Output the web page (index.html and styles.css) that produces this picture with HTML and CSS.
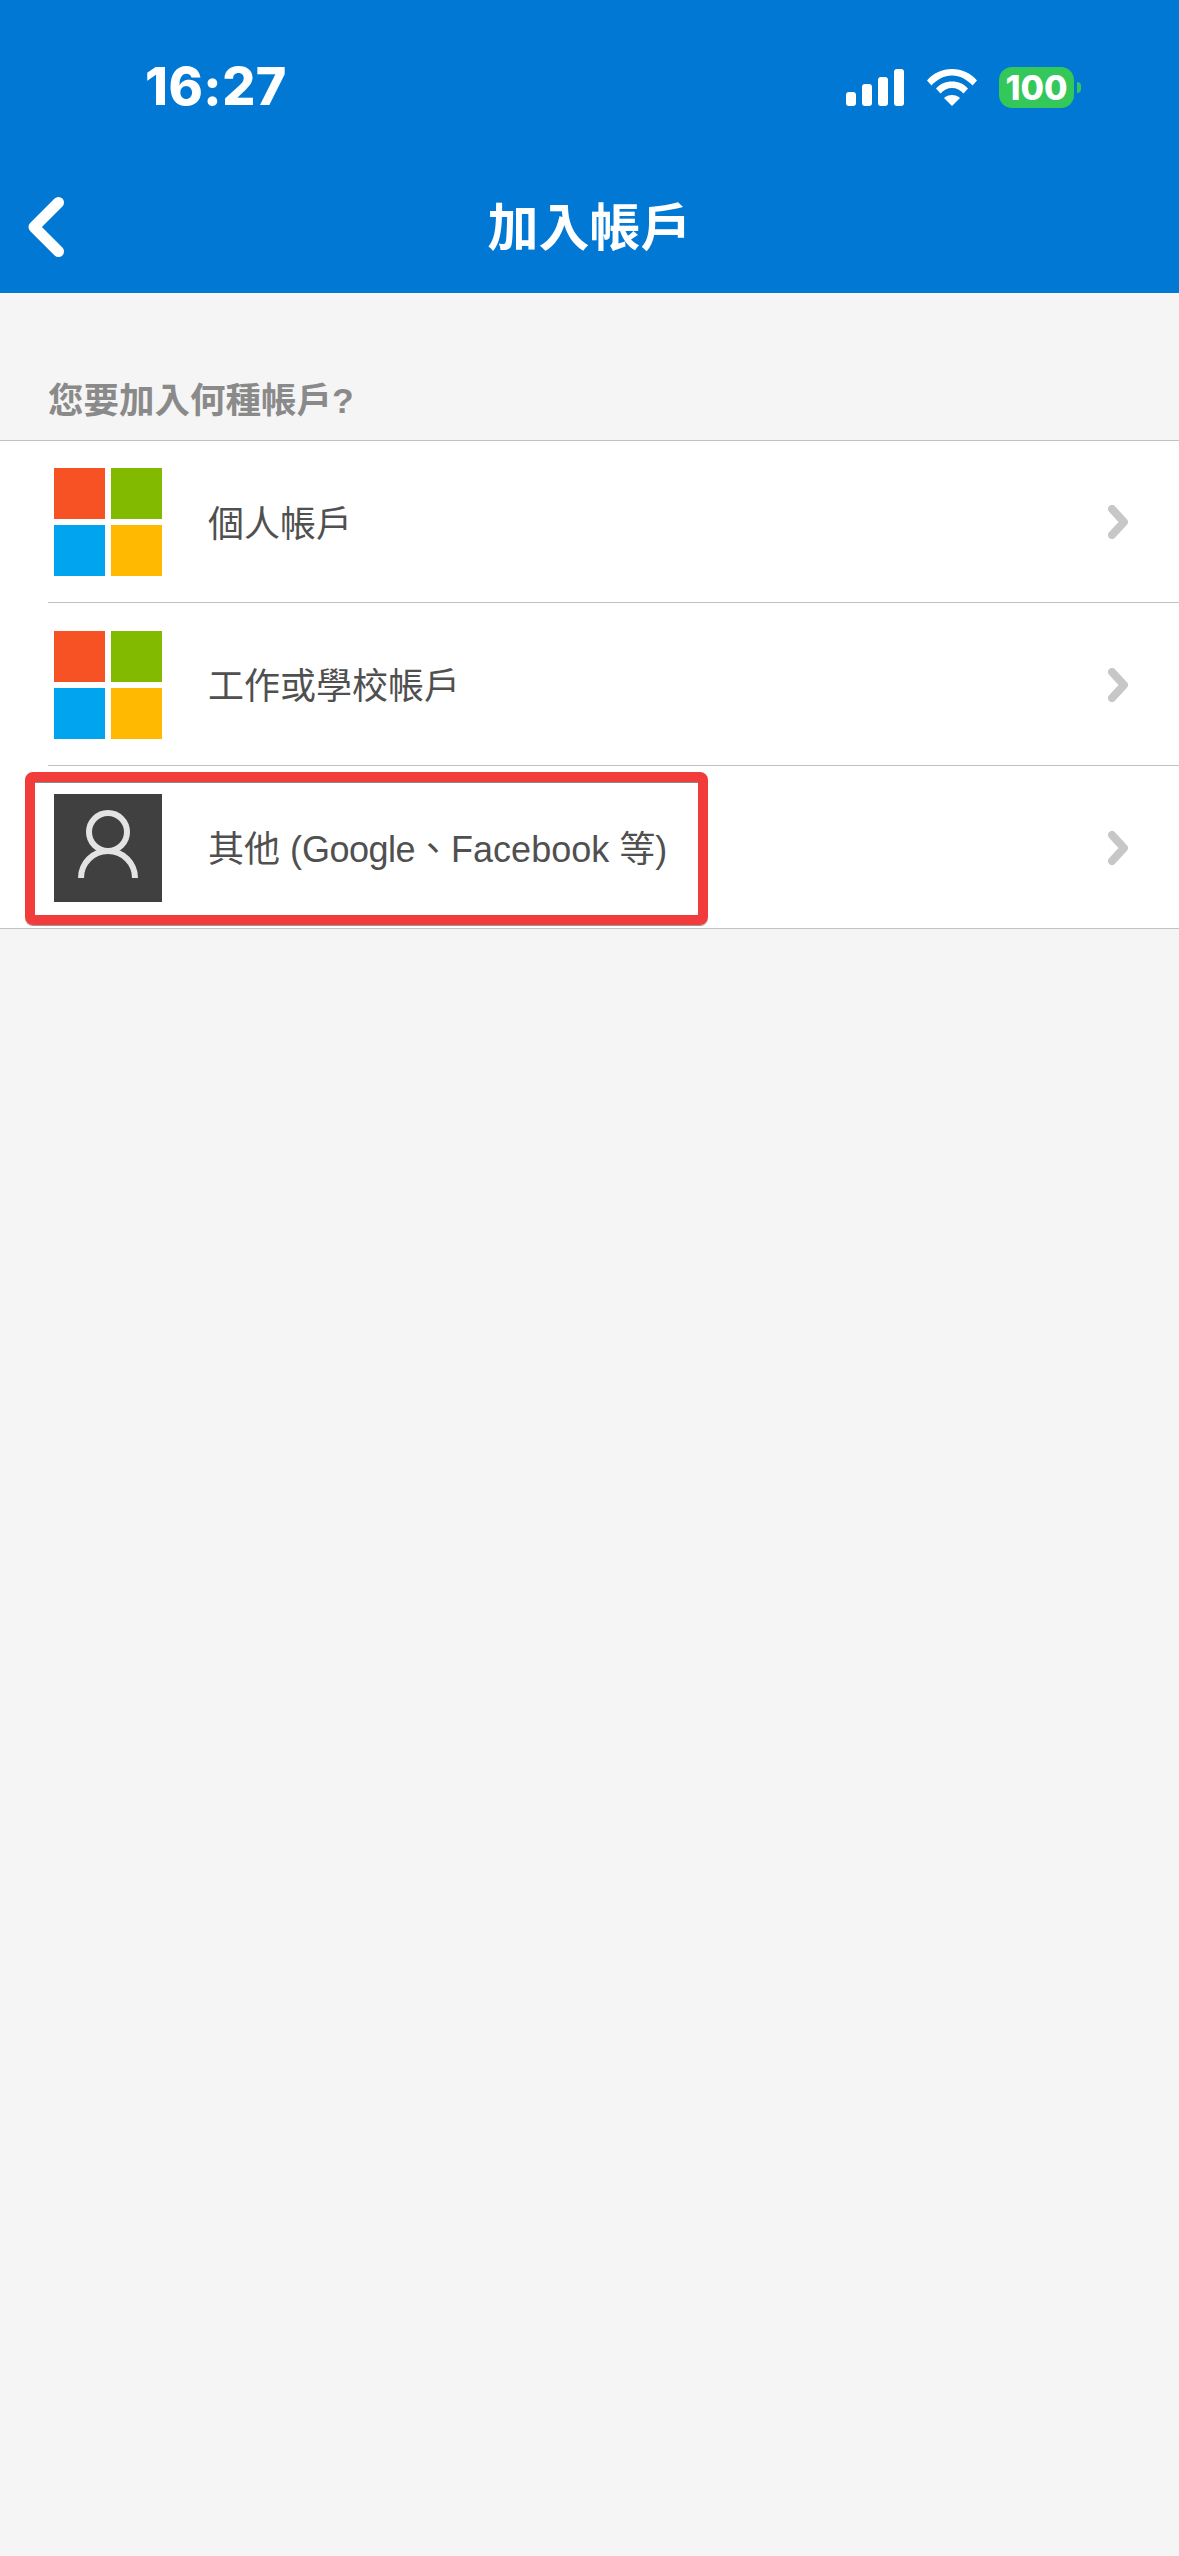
FILE: index.html

```html
<html>
    <head>
        <meta charset="utf-8">
        <link rel="stylesheet" href="styles.css">
    </head>
    <body>
        <div class="header">
            <div class="status-bar">
                <div class="time">16:27</div>
                <div class="status-icons">
                    <div class="signal">
                        <span class="bar bar1"></span>
                        <span class="bar bar2"></span>
                        <span class="bar bar3"></span>
                        <span class="bar bar4"></span>
                    </div>
                    <svg class="wifi" width="50" height="37" viewBox="0 0 50 37">
                        <path d="M0 11.500C6.500 4 15 0 25 0s18.500 4 25 11.500l-4.500 5C40 10.500 33 6.500 25 6.500S10 10.500 4.500 16.500z" fill="#fff"/>
                        <path d="M9 19.500C13 15 18.500 12.500 25 12.500s12 2.500 16 7l-4.500 5C33.500 21 29.500 19 25 19s-8.500 2-11.500 5.500z" fill="#fff"/>
                        <path d="M17 29c2-2 5-3 8-3s6 1 8 3l-8 8z" fill="#fff"/>
                    </svg>
                    <div class="battery">100</div>
                    <div class="battery-nub"></div>
                </div>
            </div>
            <div class="nav-bar">
                <svg class="back" width="36" height="60" viewBox="0 0 36 60">
                    <path d="M30.500 5.500L6 30L30.500 54.500" fill="none" stroke="#fff" stroke-width="11" stroke-linecap="round" stroke-linejoin="round"/>
                </svg>
                <h1>加入帳戶</h1>
            </div>
        </div>

        <div class="section-title">您要加入何種帳戶?</div>

        <div class="list">
            <div class="row">
                <div class="ms-logo"><i class="red"></i><i class="green"></i><i class="blue"></i><i class="yellow"></i></div>
                <div class="row-text">個人帳戶</div>
                <svg class="chevron" width="20" height="34" viewBox="0 0 20 34"><path d="M4 4L16 17L4 30" fill="none" stroke="#c7c7c7" stroke-width="8" stroke-linecap="round" stroke-linejoin="round"/></svg>
            </div>
            <div class="row">
                <div class="ms-logo"><i class="red"></i><i class="green"></i><i class="blue"></i><i class="yellow"></i></div>
                <div class="row-text">工作或學校帳戶</div>
                <svg class="chevron" width="20" height="34" viewBox="0 0 20 34"><path d="M4 4L16 17L4 30" fill="none" stroke="#c7c7c7" stroke-width="8" stroke-linecap="round" stroke-linejoin="round"/></svg>
            </div>
            <div class="row last">
                <svg class="person" width="108" height="108" viewBox="0 0 108 108">
                    <rect width="108" height="108" fill="#404040"/>
                    <circle cx="54" cy="38" r="19" fill="none" stroke="#e3e3e3" stroke-width="6"/>
                    <path d="M27 84A27 27 0 0 1 81 84" fill="none" stroke="#e3e3e3" stroke-width="6"/>
                </svg>
                <div class="row-text">其他 (<span class="latin">Google</span>、Facebook 等)</div>
                <svg class="chevron" width="20" height="34" viewBox="0 0 20 34"><path d="M4 4L16 17L4 30" fill="none" stroke="#c7c7c7" stroke-width="8" stroke-linecap="round" stroke-linejoin="round"/></svg>
                <div class="highlight"></div>
            </div>
        </div>
    </body>
</html>
```

FILE: styles.css

```css
body {
    margin: 0;
    height: 2556px;
    background-color: #f5f5f5;
    font-family: "Liberation Sans", "Noto Sans CJK TC", sans-serif;
}
.header {
    height: 293px;
    background-color: #0078d4;
    color: #fff;
}
.status-bar {
    display: flex;
    justify-content: space-between;
    height: 161px;
    box-sizing: border-box;
    padding: 67px 98px 0 145px;
}
.time {
    font-family: Inter, sans-serif;
    font-weight: 800;
    font-size: 52px;
    letter-spacing: 0.5px;
    line-height: 40px;
}
.status-icons {
    display: flex;
    align-items: flex-start;
}
.signal {
    display: flex;
    align-items: flex-end;
    gap: 6px;
    height: 37px;
    margin-top: 2px;
}
.bar {
    width: 10px;
    background: #fff;
    border-radius: 3px;
}
.bar1 { height: 14px; }
.bar2 { height: 22px; }
.bar3 { height: 29px; }
.bar4 { height: 37px; }
.wifi {
    margin: 2px 22px 0 23px;
}
.battery {
    width: 75px;
    height: 41px;
    background: #34c759;
    border-radius: 13px;
    font-family: Inter, sans-serif;
    font-weight: 800;
    font-size: 34px;
    line-height: 41px;
    text-align: center;
}
.battery-nub {
    width: 4px;
    height: 11px;
    margin: 15px 0 0 3px;
    background: #34c759;
    border-radius: 0 6px 6px 0;
}
.nav-bar {
    position: relative;
    height: 132px;
}
.nav-bar h1 {
    margin: 0;
    padding-top: 2px;
    text-align: center;
    font-size: 51px;
    font-weight: 700;
    line-height: 132px;
}
.back {
    position: absolute;
    left: 28px;
    top: 36px;
}
.section-title {
    height: 147px;
    box-sizing: border-box;
    padding: 83px 0 0 48px;
    font-size: 35.5px;
    font-weight: 700;
    line-height: 50px;
    color: #8a8a8a;
}
.list {
    background: #fff;
    border-top: 1px solid #c2c2c2;
}
.row {
    position: relative;
    display: flex;
    align-items: center;
    height: 163px;
    padding: 0 51px 0 54px;
}
.row:first-child {
    height: 162px;
}
.row::after {
    content: "";
    position: absolute;
    left: 48px;
    right: 0;
    bottom: 0;
    border-bottom: 1px solid #c2c2c2;
}
.row.last::after {
    left: 0;
}
.ms-logo {
    display: grid;
    grid-template-columns: 51px 51px;
    grid-template-rows: 51px 51px;
    gap: 6px;
}
.red { background: #f65223; }
.green { background: #82ba00; }
.blue { background: #00a4ef; }
.yellow { background: #ffb900; }
.row-text {
    flex: 1;
    margin: 0 0 3px 46px;
    font-size: 36px;
    color: #505050;
}
.latin {
    letter-spacing: -0.5px;
}
.highlight {
    position: absolute;
    left: 25px;
    top: 6px;
    width: 683px;
    height: 153px;
    box-sizing: border-box;
    border: 10px solid #f23c3c;
    border-radius: 8px;
    box-shadow: 0 1px 0 #9a9a9a, inset 0 1px 0 #8a8a8a;
}
```
